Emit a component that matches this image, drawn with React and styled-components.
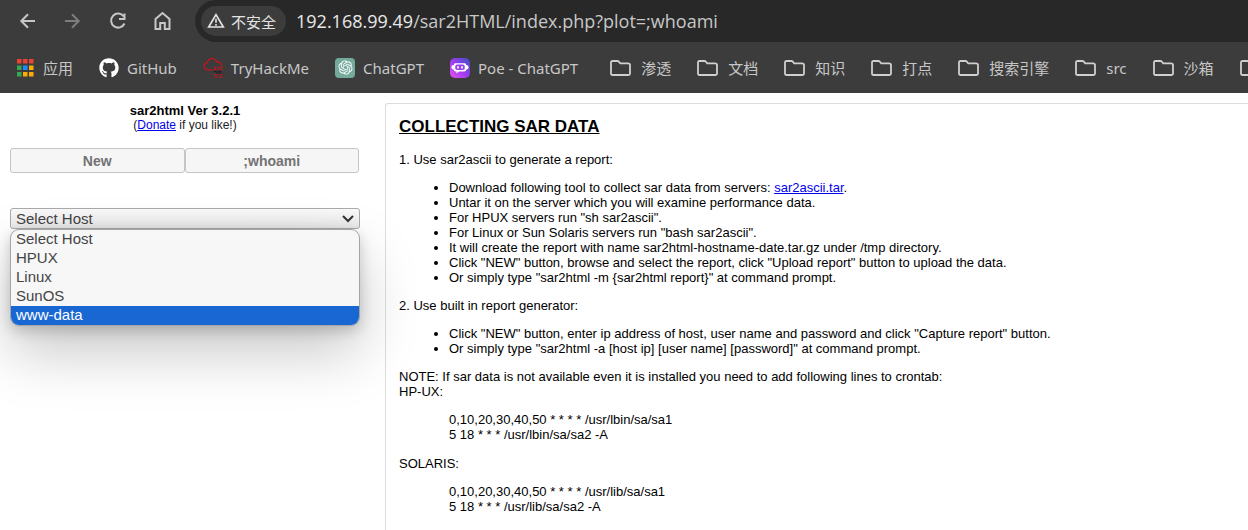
import React, { useState } from "react";
import styled, { createGlobalStyle } from "styled-components";
import { FaGithub } from "react-icons/fa";
import { RiOpenaiFill } from "react-icons/ri";

const GlobalStyle = createGlobalStyle`
  * { box-sizing: border-box; }
  body { margin: 0; background: #fff; overflow: hidden; }
`;

const uiFont = `"Noto Sans", "Noto Sans CJK SC", sans-serif`;

const Page = styled.div`
  display: flex;
  flex-direction: column;
  min-height: 100vh;
  font-family: "Liberation Sans", Arial, sans-serif;
  font-size: 13px;
  line-height: 15px;
  color: #000;
`;

const Chrome = styled.header`
  background: #3c3c3c;
  font-family: ${uiFont};
`;

const Toolbar = styled.div`
  display: flex;
  height: 42px;
`;

const NavButtons = styled.div`
  display: flex;
  align-items: center;
  gap: 25px;
  padding: 0 22px 0 18px;
`;

const NavButton = styled.button`
  display: flex;
  width: 20px;
  height: 20px;
  padding: 0;
  border: 0;
  background: none;
  color: ${(p) => (p.disabled ? "#7d7d7d" : "#c7c7c7")};
`;

const Omnibox = styled.div`
  display: flex;
  flex: 1;
  align-items: center;
  gap: 10px;
  min-width: 0;
  padding-left: 6px;
  border-radius: 21px 0 0 21px;
  background: #282828;
`;

const SecurityChip = styled.button`
  display: flex;
  align-items: center;
  flex: none;
  gap: 6px;
  height: 30px;
  padding: 0 10px 0 6px;
  border: 0;
  border-radius: 15px;
  background: #3c3c3c;
  color: #e3e3e3;
  font-family: ${uiFont};
  font-size: 15px;
`;

const Address = styled.div`
  display: flex;
  flex: 1;
  font-family: "Open Sans", sans-serif;
  font-size: 18px;
  line-height: 28px;
  white-space: pre;
`;

const Host = styled.span`
  color: #e8e8e8;
`;

const Path = styled.span`
  color: #c7c7c7;
`;

const BookmarkBar = styled.nav`
  display: flex;
  align-items: center;
  gap: 30px;
  height: 51px;
  padding-left: 15px;
  overflow: hidden;
`;

const BookmarkGroup = styled.div`
  display: flex;
  flex: none;
  gap: ${(p) => p.$gap}px;
`;

const Bookmark = styled.a`
  display: flex;
  align-items: center;
  flex: none;
  gap: 8px;
  color: #c7c7c7;
  font-size: 15px;
  line-height: 20px;
  text-decoration: none;
  white-space: nowrap;
`;

const IconBox = styled.span`
  display: flex;
  align-items: center;
  justify-content: center;
  width: ${(p) => p.$width || 20}px;
  height: 20px;
  border-radius: 4px;
  background: ${(p) => p.$background || "none"};
  color: ${(p) => p.$color || "#fff"};
`;

const Content = styled.div`
  display: flex;
  flex: 1;
  gap: 25px;
  padding: 10px 0 0 10px;
`;

const Sidebar = styled.aside`
  flex: none;
  width: 350px;
`;

const Title = styled.div`
  text-align: center;
  font-weight: bold;
`;

const Donate = styled.div`
  text-align: center;
  font-size: 12px;
  line-height: 14px;
  color: #222;
`;

const Link = styled.a`
  color: #0000ee;
`;

const Tabs = styled.div`
  display: flex;
  margin: 16px 1px 35px 0;
`;

const Tab = styled.button`
  flex: 1;
  height: 25px;
  padding: 0;
  border: 1px solid #c5c5c5;
  border-radius: 3px;
  background: #f6f6f6;
  color: #737373;
  font: bold 14px "Liberation Sans", Arial, sans-serif;
`;

const HostField = styled.div`
  position: relative;
  color: #444;
  font-size: 15px;
`;

const HostSelect = styled.select`
  display: block;
  width: 100%;
  height: 21px;
  padding: 0 5px;
  appearance: none;
  border: 1px solid #aaa;
  border-radius: 3px;
  background: linear-gradient(#fafafa, #e8e8e8);
  color: inherit;
  font: 15px "Liberation Sans", Arial, sans-serif;
`;

const Chevron = styled.svg`
  position: absolute;
  top: 7px;
  right: 6px;
  pointer-events: none;
`;

const Options = styled.ul`
  position: absolute;
  top: 100%;
  left: 0;
  right: 0;
  margin: 0;
  padding: 0;
  list-style: none;
  overflow: hidden;
  border: 1px solid #a5a5a5;
  border-radius: 9px;
  background: #f7f7f7;
  box-shadow: 0 26px 58px rgba(0, 0, 0, 0.22), 0 5px 14px rgba(0, 0, 0, 0.18);
`;

const Option = styled.li`
  padding: 0 5px 2px;
  line-height: 17px;
  background: ${(p) => (p["aria-selected"] ? "#1967d2" : "none")};
  color: ${(p) => (p["aria-selected"] ? "#fff" : "inherit")};
`;

const Panel = styled.main`
  flex: 1;
  min-width: 0;
  padding: 13px 13px 15px;
  border: solid #ddd;
  border-width: 1px 0 0 1px;
  border-radius: 3px 0 0 0;
`;

const Heading = styled.h1`
  margin: 0 0 16px;
  font-size: 17px;
  line-height: 19px;
  text-decoration: underline;
`;

const Text = styled.p`
  margin: 0;
`;

const List = styled.ul`
  margin: 13px 0;
  padding-left: 50px;
`;

const Crontab = styled.div`
  margin: 13px 0 14px;
  padding-left: 50px;
`;

const stroke = { fill: "none", stroke: "currentColor", strokeWidth: 2 };

const BackIcon = () => (
  <svg width="20" height="20" viewBox="0 0 20 20" {...stroke}>
    <path d="M17 10H3.5M10 3.3 3.3 10l6.7 6.7" />
  </svg>
);

const ForwardIcon = () => (
  <svg width="20" height="20" viewBox="0 0 20 20" {...stroke}>
    <path d="M2 10h13.5M9 3.3l6.7 6.7-6.7 6.7" />
  </svg>
);

const ReloadIcon = () => (
  <svg width="20" height="20" viewBox="0 0 20 20" {...stroke}>
    <path d="M15.8 5.5A7 7 0 1 0 16.500 12.500M16.500 2.500V8H11" />
  </svg>
);

const HomeIcon = () => (
  <svg width="20" height="20" viewBox="0 0 20 20" {...stroke}>
    <path d="M2.500 18V8L9.500 2l7 6v10h-4.700v-6H7.200v6z" />
  </svg>
);

const WarningIcon = () => (
  <svg width="18" height="18" viewBox="0 0 18 18" {...stroke}>
    <path d="M9 2.6 16.3 15H1.7z" strokeWidth="1.7" />
    <path d="M9 6.8v4M9 12v1.7" strokeWidth="1.6" />
  </svg>
);

const appColors = [
  "#ea4335", "#ea4335", "#ea4335",
  "#34a853", "#1a8cff", "#fbab05",
  "#34a853", "#fbab05", "#fbab05",
];

const AppsIcon = () => (
  <svg width="20" height="20" viewBox="0 0 20 20">
    {appColors.map((c, i) => (
      <rect key={i} x={2 + (i % 3) * 6} y={1 + Math.floor(i / 3) * 6.500} width="4.5" height="4.5" fill={c} />
    ))}
  </svg>
);

const CloudIcon = () => (
  <svg width="20" height="20" viewBox="0 0 20 20" fill="none" stroke="#c4141a" strokeWidth="1.3">
    <path d="M9.5 11.8H4.4A3.6 3.6 0 0 1 4 4.7C5.200 1.300 7 .7 9 .7c2.700 0 4 1.500 4.500 3.300 2.800-.6 5.300 1.200 5.300 4.500" />
    <path d="M11 9.500h3M15.500 9.500h4M11 11.500h5M17.500 11.500h2" strokeDasharray="2 .7" />
    <path d="M11 13.500h8M13 15.200h6" stroke="#222" strokeDasharray="2 .8" />
    <path d="M10.500 16.700h5M17 16.700h3M12 19h3M16 19h3.500" strokeDasharray="2 .7" />
  </svg>
);

const PoeIcon = () => (
  <svg width="20" height="20" viewBox="0 0 20 20">
    <defs>
      <linearGradient id="poe" x1="0" y1="1" x2="1" y2="0">
        <stop offset="0" stopColor="#e850f0" />
        <stop offset=".5" stopColor="#9b3df0" />
        <stop offset="1" stopColor="#3c50c0" />
      </linearGradient>
    </defs>
    <rect width="20" height="20" rx="5" fill="url(#poe)" />
    <path d="M5.500 5.200h9a1.600 1.600 0 0 1 1.700 1.700 1.800 1.800 0 0 1 0 4.800 1.700 1.700 0 0 1-1.700 1.800H9l-2.500 2V13.500h-1a1.700 1.700 0 0 1-1.700-1.800 1.800 1.800 0 0 1 0-4.800 1.600 1.600 0 0 1 1.700-1.700z" fill="#fff" />
    <rect x="5.300" y="6.600" width="9.400" height="5.400" rx="1.800" fill="#9440ec" />
    <path d="M8 8.800v1M12 8.800v1" stroke="#fff" strokeWidth="1.700" strokeLinecap="round" />
  </svg>
);

const FolderIcon = () => (
  <svg width="21" height="16" viewBox="0 0 21 16" fill="none" stroke="currentColor" strokeWidth="1.800">
    <path d="M1 13.500V2.500Q1 1 2.500 1h5q.8 0 1.300.7l1.400 1.600H18q2 0 2 1.700v8.500q0 1.500-1.500 1.500h-16Q1 15 1 13.500z" />
  </svg>
);

const sites = [
  { label: "应用", icon: <AppsIcon /> },
  { label: "GitHub", icon: <FaGithub size={20} /> },
  { label: "TryHackMe", icon: <CloudIcon /> },
  { label: "ChatGPT", icon: <RiOpenaiFill size={17} />, background: "#74aa9c" },
  { label: "Poe - ChatGPT", icon: <PoeIcon /> },
];

const folders = ["渗透", "文档", "知识", "打点", "搜索引擎", "src", "沙箱", ""];

const hosts = ["Select Host", "HPUX", "Linux", "SunOS", "www-data"];

export default function App() {
  const [host, setHost] = useState("Select Host");
  return (
    <Page>
      <GlobalStyle />
      <Chrome>
        <Toolbar>
          <NavButtons>
            <NavButton aria-label="Back"><BackIcon /></NavButton>
            <NavButton aria-label="Forward" disabled><ForwardIcon /></NavButton>
            <NavButton aria-label="Reload"><ReloadIcon /></NavButton>
            <NavButton aria-label="Home"><HomeIcon /></NavButton>
          </NavButtons>
          <Omnibox>
            <SecurityChip><WarningIcon />不安全</SecurityChip>
            <Address>
              <Host>192.168.99.49</Host>
              <Path>/sar2HTML/index.php?plot=;whoami</Path>
            </Address>
          </Omnibox>
        </Toolbar>
        <BookmarkBar>
          <BookmarkGroup $gap={26}>
            {sites.map((site) => (
              <Bookmark href="#" key={site.label}>
                <IconBox $background={site.background}>{site.icon}</IconBox>
                {site.label}
              </Bookmark>
            ))}
          </BookmarkGroup>
          <BookmarkGroup $gap={24}>
            {folders.map((name) => (
              <Bookmark href="#" key={name}>
                <IconBox $width={25} $color="#cfcfcf"><FolderIcon /></IconBox>
                {name}
              </Bookmark>
            ))}
          </BookmarkGroup>
        </BookmarkBar>
      </Chrome>
      <Content>
        <Sidebar>
          <Title>sar2html Ver 3.2.1</Title>
          <Donate>(<Link href="#">Donate</Link> if you like!)</Donate>
          <Tabs>
            <Tab>New</Tab>
            <Tab>;whoami</Tab>
          </Tabs>
          <HostField>
            <HostSelect id="host" aria-label="Select Host" value={host} onChange={(e) => setHost(e.target.value)}>
              {hosts.map((h) => <option key={h}>{h}</option>)}
            </HostSelect>
            <Chevron width="12" height="8" viewBox="0 0 12 8" fill="none" stroke="#333" strokeWidth="2">
              <path d="M1 1l5 5 5-5" />
            </Chevron>
            <Options role="listbox">
              {hosts.map((h) => (
                <Option key={h} role="option" aria-selected={h === "www-data"} onClick={() => setHost(h)}>{h}</Option>
              ))}
            </Options>
          </HostField>
        </Sidebar>
        <Panel>
          <Heading>COLLECTING SAR DATA</Heading>
          <Text>1. Use sar2ascii to generate a report:</Text>
          <List>
            <li>Download following tool to collect sar data from servers: <Link href="#">sar2ascii.tar</Link>.</li>
            <li>Untar it on the server which you will examine performance data.</li>
            <li>For HPUX servers run "sh sar2ascii".</li>
            <li>For Linux or Sun Solaris servers run "bash sar2ascii".</li>
            <li>It will create the report with name sar2html-hostname-date.tar.gz under /tmp directory.</li>
            <li>Click "NEW" button, browse and select the report, click "Upload report" button to upload the data.</li>
            <li>Or simply type "sar2html -m {"{"}sar2html report{"}"}" at command prompt.</li>
          </List>
          <Text>2. Use built in report generator:</Text>
          <List>
            <li>Click "NEW" button, enter ip address of host, user name and password and click "Capture report" button.</li>
            <li>Or simply type "sar2html -a [host ip] [user name] [password]" at command prompt.</li>
          </List>
          <Text>NOTE: If sar data is not available even it is installed you need to add following lines to crontab:</Text>
          <Text>HP-UX:</Text>
          <Crontab>
            <Text>0,10,20,30,40,50 * * * * /usr/lbin/sa/sa1</Text>
            <Text>5 18 * * * /usr/lbin/sa/sa2 -A</Text>
          </Crontab>
          <Text>SOLARIS:</Text>
          <Crontab>
            <Text>0,10,20,30,40,50 * * * * /usr/lib/sa/sa1</Text>
            <Text>5 18 * * * /usr/lib/sa/sa2 -A</Text>
          </Crontab>
        </Panel>
      </Content>
    </Page>
  );
}
